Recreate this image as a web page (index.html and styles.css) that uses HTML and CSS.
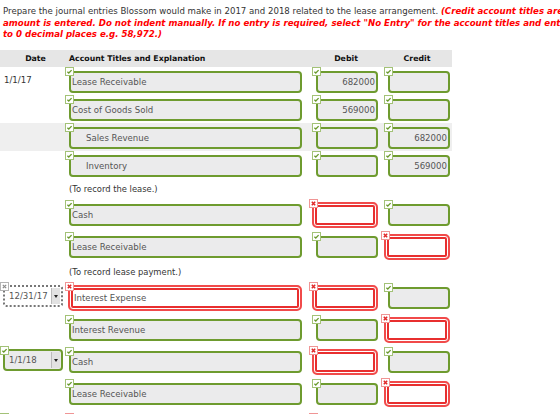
FILE: index.html
```html
<!DOCTYPE html>
<html lang="en">
<head>
  <meta charset="UTF-8">
  <title>Journal Entries</title>
  <link rel="stylesheet" href="styles.css">
</head>
<body>
  <svg class="defs" width="0" height="0">
    <symbol id="ok" viewBox="0 0 9 9">
      <rect x="0.5" y="0.5" width="8" height="8" fill="#fff" stroke="#a3c277"/>
      <path d="M2.4 4.7 L3.8 6 L6.6 3.1" fill="none" stroke="#6a9a2e" stroke-width="1.3"/>
    </symbol>
    <symbol id="bad" viewBox="0 0 9 9">
      <rect x="0.5" y="0.5" width="8" height="8" fill="#fff" stroke="#f09595"/>
      <path d="M2.8 2.8 L6.2 6.2 M6.2 2.8 L2.8 6.2" fill="none" stroke="#e02a2a" stroke-width="1.5"/>
    </symbol>
    <symbol id="off" viewBox="0 0 9 9">
      <rect x="0.5" y="0.5" width="8" height="8" fill="#fff" stroke="#b4b4b4"/>
      <path d="M2.8 2.8 L6.2 6.2 M6.2 2.8 L2.8 6.2" fill="none" stroke="#8a8a8a" stroke-width="1.2"/>
    </symbol>
  </svg>

  <p class="intro">Prepare the journal entries Blossom would make in 2017 and 2018 related to the lease arrangement. <em>(Credit account titles are</em><br><em>amount is entered. Do not indent manually. If no entry is required, select "No Entry" for the account titles and enter</em><br><em>to 0 decimal places e.g. 58,972.)</em></p>

  <div class="journal">
    <div class="row head">
      <div class="date">Date</div>
      <div class="acct">Account Titles and Explanation</div>
      <div class="amt">Debit</div>
      <div class="amt">Credit</div>
    </div>

    <div class="row">
      <div class="date"><span class="day">1/1/17</span></div>
      <div class="acct"><span class="field"><svg class="mark"><use href="#ok"/></svg>Lease Receivable</span></div>
      <div class="amt"><span class="field num"><svg class="mark"><use href="#ok"/></svg>682000</span></div>
      <div class="amt cr"><span class="field"><svg class="mark"><use href="#ok"/></svg></span></div>
    </div>
    <div class="row">
      <div class="date"></div>
      <div class="acct"><span class="field"><svg class="mark"><use href="#ok"/></svg>Cost of Goods Sold</span></div>
      <div class="amt"><span class="field num"><svg class="mark"><use href="#ok"/></svg>569000</span></div>
      <div class="amt cr"><span class="field"><svg class="mark"><use href="#ok"/></svg></span></div>
    </div>
    <div class="row hl">
      <div class="date"></div>
      <div class="acct"><span class="field indent"><svg class="mark"><use href="#ok"/></svg>Sales Revenue</span></div>
      <div class="amt"><span class="field"><svg class="mark"><use href="#ok"/></svg></span></div>
      <div class="amt cr"><span class="field num"><svg class="mark"><use href="#ok"/></svg>682000</span></div>
    </div>
    <div class="row">
      <div class="date"></div>
      <div class="acct"><span class="field indent"><svg class="mark"><use href="#ok"/></svg>Inventory</span></div>
      <div class="amt"><span class="field"><svg class="mark"><use href="#ok"/></svg></span></div>
      <div class="amt cr"><span class="field num"><svg class="mark"><use href="#ok"/></svg>569000</span></div>
    </div>
    <div class="memo">(To record the lease.)</div>

    <div class="row">
      <div class="date"></div>
      <div class="acct"><span class="field"><svg class="mark"><use href="#ok"/></svg>Cash</span></div>
      <div class="amt"><span class="field bad"><svg class="mark"><use href="#bad"/></svg></span></div>
      <div class="amt cr"><span class="field"><svg class="mark"><use href="#ok"/></svg></span></div>
    </div>
    <div class="row">
      <div class="date"></div>
      <div class="acct"><span class="field"><svg class="mark"><use href="#ok"/></svg>Lease Receivable</span></div>
      <div class="amt"><span class="field"><svg class="mark"><use href="#ok"/></svg></span></div>
      <div class="amt cr"><span class="field bad"><svg class="mark"><use href="#bad"/></svg></span></div>
    </div>
    <div class="memo">(To record lease payment.)</div>

    <div class="row">
      <div class="date"><span class="pick blank"><svg class="mark"><use href="#off"/></svg>12/31/17<i class="arrow"></i></span></div>
      <div class="acct"><span class="field bad"><svg class="mark"><use href="#bad"/></svg>Interest Expense</span></div>
      <div class="amt"><span class="field bad"><svg class="mark"><use href="#bad"/></svg></span></div>
      <div class="amt cr"><span class="field"><svg class="mark"><use href="#ok"/></svg></span></div>
    </div>
    <div class="row">
      <div class="date"></div>
      <div class="acct"><span class="field"><svg class="mark"><use href="#ok"/></svg>Interest Revenue</span></div>
      <div class="amt"><span class="field"><svg class="mark"><use href="#ok"/></svg></span></div>
      <div class="amt cr"><span class="field bad"><svg class="mark"><use href="#bad"/></svg></span></div>
    </div>
    <div class="row">
      <div class="date"><span class="pick"><svg class="mark"><use href="#ok"/></svg>1/1/18<i class="arrow"></i></span></div>
      <div class="acct"><span class="field"><svg class="mark"><use href="#ok"/></svg>Cash</span></div>
      <div class="amt"><span class="field bad"><svg class="mark"><use href="#bad"/></svg></span></div>
      <div class="amt cr"><span class="field"><svg class="mark"><use href="#ok"/></svg></span></div>
    </div>
    <div class="row">
      <div class="date"></div>
      <div class="acct"><span class="field"><svg class="mark"><use href="#ok"/></svg>Lease Receivable</span></div>
      <div class="amt"><span class="field"><svg class="mark"><use href="#ok"/></svg></span></div>
      <div class="amt cr"><span class="field bad"><svg class="mark"><use href="#bad"/></svg></span></div>
    </div>
    <div class="row next">
      <div class="date"><span class="pick"><svg class="mark"><use href="#ok"/></svg></span></div>
      <div class="acct"><span class="field bad"><svg class="mark"><use href="#bad"/></svg></span></div>
      <div class="amt"><span class="field bad"><svg class="mark"><use href="#bad"/></svg></span></div>
      <div class="amt cr"><span class="field"><svg class="mark"><use href="#ok"/></svg></span></div>
    </div>
  </div>
</body>
</html>
```

FILE: styles.css
```css
html, body { margin: 0; height: 100%; overflow: hidden; background: #fff; }
body { font-family: "DejaVu Sans", Verdana, sans-serif; font-size: 8.6px; color: #333; }
.defs { position: absolute; }

.intro { margin: 0 0 9px; padding: 6px 0 0 3px; line-height: 11.5px; white-space: nowrap; }
.intro em { color: #f00; font-weight: bold; font-size: 8.65px; }

.journal { width: 452px; }
.row { display: grid; grid-template-columns: 68px 242px 72px 70px; align-items: center; padding: 4px 0 2px; }
.row.hl { background: #efefef; }
.row.next { padding-top: 7px; }
.row.head { height: 17px; padding: 0; background: #e6e6e6; font-size: 7.8px; font-weight: bold; color: #111; }
.head .date, .head .amt { text-align: center; }
.head .date { align-self: center; }
.head .acct { padding-left: 1px; }

.date { align-self: stretch; padding-left: 3px; }
.day { display: block; padding-top: 4px; padding-left: 1px; }
.acct { display: flex; padding-left: 1px; }
.amt { display: flex; justify-content: flex-end; padding-right: 4px; }
.amt.cr { padding-right: 2px; }
.head .amt { display: block; padding: 0; }

.field { position: relative; display: flex; align-items: center; box-sizing: border-box; height: 22px; padding: 0 3px 0 1px; border: 2px solid #6e9b2f; border-radius: 4px; background: #ebebec; color: #555; font-size: 8.6px; white-space: nowrap; }
.acct .field { width: 233px; }
.amt .field { width: 62px; }
.field.num { justify-content: flex-end; padding-right: 1px; }
.field.indent { padding-left: 15px; }
.field.bad { height: 26px; border: 2px solid #f14a4a; border-radius: 5px; background: #fff; box-shadow: inset 0 0 0 1px #fff, inset 0 0 0 3px #e82f2f; }
.amt .field.bad { width: 66px; }
.acct .field.bad { width: 234px; margin-left: -1px; padding-left: 4px; }

.mark { position: absolute; left: -6px; top: -6px; width: 9px; height: 9px; }
.bad > .mark { left: -5px; top: -5px; }

.pick { position: relative; display: flex; align-items: center; box-sizing: border-box; width: 60px; height: 22px; padding-left: 4px; border: 2px solid #6e9b2f; border-radius: 4px; background: #ebebec; color: #555; font-size: 8.6px; }
.pick.blank { border: 2px dotted #777; border-radius: 3px; background: #fff; }
.pick .mark { left: -5px; top: -5px; }
.arrow { position: absolute; right: 1px; top: 1px; bottom: 1px; width: 8px; border-left: 1px solid #bbb; background: #e2e2e2; }
.arrow::after { content: ""; position: absolute; left: 2px; top: 7px; border: 2px solid transparent; border-top: 3px solid #222; }

.memo { padding: 5px 0 4px 69px; line-height: 10px; font-size: 8.4px; color: #333; }
```
